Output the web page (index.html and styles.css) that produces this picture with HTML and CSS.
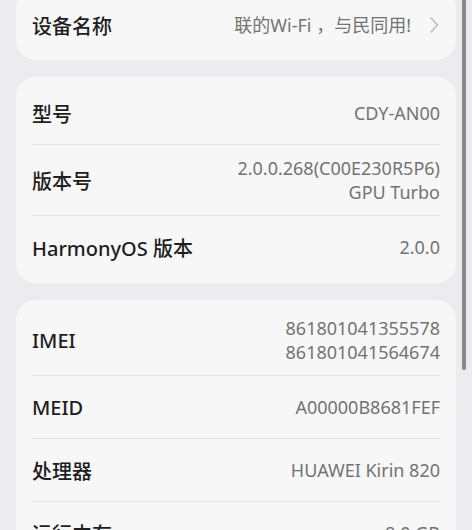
FILE: index.html
```html
<!DOCTYPE html>
<html lang="zh-CN">
<head>
<meta charset="utf-8">
<link rel="stylesheet" href="styles.css">
</head>
<body>
<div class="page">
  <div class="card card-top">
    <div class="row">
      <span class="label">设备名称</span>
      <span class="value link"><span>联的Wi-Fi&nbsp;，与民同用!</span><svg class="chev" width="10" height="18" viewBox="0 0 10 18"><path d="M2 2 L8.5 9 L2 16" fill="none" stroke="#b8b8b8" stroke-width="1.4" stroke-linecap="round" stroke-linejoin="round"/></svg></span>
    </div>
  </div>
  <div class="card">
    <div class="row"><span class="label">型号</span><span class="value">CDY-AN00</span></div>
    <div class="row"><span class="label">版本号</span><span class="value">2.0.0.268(C00E230R5P6)<br>GPU Turbo</span></div>
    <div class="row"><span class="label">HarmonyOS 版本</span><span class="value">2.0.0</span></div>
  </div>
  <div class="card">
    <div class="row"><span class="label">IMEI</span><span class="value">861801041355578<br>861801041564674</span></div>
    <div class="row"><span class="label">MEID</span><span class="value">A00000B8681FEF</span></div>
    <div class="row"><span class="label">处理器</span><span class="value">HUAWEI Kirin 820</span></div>
    <div class="row"><span class="label">运行内存</span><span class="value">8.0 GB</span></div>
  </div>
</div>
<div class="scrollbar"></div>
</body>
</html>
```
FILE: styles.css
```css
html, body {
  margin: 0;
  padding: 0;
  background: #ececee;
  overflow: hidden;
}
body {
  width: 472px;
  height: 530px;
  font-family: "Noto Sans", "Noto Sans CJK SC", sans-serif;
}
.page {
  display: flex;
  flex-direction: column;
  gap: 17px;
  padding: 0 16px;
}
.card {
  background: #f7f7f7;
  border-radius: 20px;
  padding: 5px 16px;
}
.card-top {
  margin-top: -10px;
  padding-top: 4px;
  padding-bottom: 4px;
}
.row {
  display: flex;
  justify-content: space-between;
  align-items: center;
  min-height: 40px;
  padding: 11px 0;
  border-bottom: 1px solid #e5e5e5;
}
.row:last-child {
  border-bottom: none;
}
.label {
  font-size: 20px;
  font-weight: 500;
  color: #1e1e1e;
}
.value {
  font-size: 18px;
  color: #737373;
  text-align: right;
  line-height: 24px;
}
.link {
  display: flex;
  align-items: center;
  gap: 18px;
}
.chev {
  display: block;
  margin-right: 1px;
}
.scrollbar {
  position: absolute;
  left: 462px;
  top: -20px;
  width: 4px;
  height: 390px;
  border-radius: 2px;
  background: #8a8a8a;
}
```
